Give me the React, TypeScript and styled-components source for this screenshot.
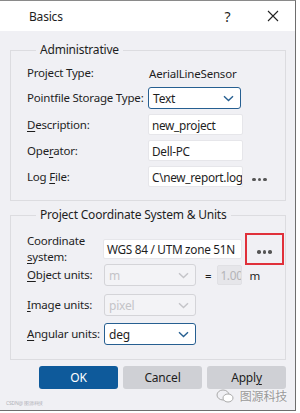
import React from "react";
import styled, { createGlobalStyle } from "styled-components";

const Global = createGlobalStyle`
  html, body { margin: 0; padding: 0; background: #ffffff; }
  body { font-family: "Noto Sans", "Open Sans", sans-serif; font-size: 11.5px; letter-spacing: -0.2px; color: #1e1e1e; }
  * { box-sizing: border-box; }
`;

const Dialog = styled.div`
  position: relative;
  width: 296px;
  height: 411px;
  border-top: 1px solid #8a8a8a;
  border-right: 1px solid #6e6e6e;
  border-bottom: 1px solid #6e6e6e;
  background: #f0f0f4;
  display: flex;
  flex-direction: column;
`;

const TitleBar = styled.div`
  height: 30px;
  background: #ffffff;
  display: flex;
  align-items: center;
  padding-left: 29px;
  font-size: 12px;
`;

const Title = styled.div`
  flex: 1;
`;

const TitleButton = styled.div`
  width: 45px;
  height: 30px;
  display: flex;
  align-items: center;
  justify-content: center;
  font-size: 14px;
`;

const Body = styled.div`
  padding: 12px 9px 0 10px;
  display: flex;
  flex-direction: column;
  gap: 7px;
`;

const Group = styled.fieldset<{ $pad: string }>`
  margin: 0;
  border: 1px solid #dcdce0;
  padding: ${(p) => p.$pad};
  display: flex;
  flex-direction: column;
  min-width: 0;
`;

const Legend = styled.legend`
  padding: 0 4px;
  margin-left: 9px;
  font-size: 12px;
  line-height: 14px;
`;

const Row = styled.div<{ $h: number; $mt?: number }>`
  display: flex;
  align-items: center;
  height: ${(p) => p.$h}px;
  margin-top: ${(p) => p.$mt ?? 0}px;
`;

const Label = styled.div<{ $w: number }>`
  width: ${(p) => p.$w}px;
  flex: none;
  line-height: 16px;
  white-space: nowrap;
`;

const Value = styled.div`
  padding-left: 1px;
`;

const Input = styled.div<{ $w: number; $h?: number; $disabled?: boolean }>`
  width: ${(p) => p.$w}px;
  height: ${(p) => p.$h ?? 21}px;
  flex: none;
  background: ${(p) => (p.$disabled ? "#e6e6ea" : "#ffffff")};
  color: ${(p) => (p.$disabled ? "#b4b4b8" : "#1e1e1e")};
  border: 1px solid ${(p) => (p.$disabled ? "#e0e0e4" : "#e6e6ea")};
  border-radius: 2px;
  display: flex;
  align-items: center;
  padding-left: ${(p) => (p.$disabled ? 2 : 3)}px;
  white-space: nowrap;
  overflow: hidden;
  font-size: 11.8px;
  letter-spacing: -0.3px;
`;

const Select = styled.div<{ $w: number; $disabled?: boolean }>`
  width: ${(p) => p.$w}px;
  height: 22px;
  flex: none;
  background: ${(p) => (p.$disabled ? "#f3f3f6" : "#ffffff")};
  color: ${(p) => (p.$disabled ? "#c4c4c8" : "#1e1e1e")};
  border: 1px solid ${(p) => (p.$disabled ? "#d4d4d8" : "#265f91")};
  border-radius: 3px;
  display: flex;
  align-items: center;
  justify-content: space-between;
  padding: 0 6px 0 4px;
  font-size: 12px;
`;

const Dots = styled.div`
  display: flex;
  justify-content: center;
  align-items: center;
  gap: 2px;
  padding-top: 6px;
`;

const LogDots = styled(Dots)`
  margin-left: 9px;
`;

const Dot = styled.span`
  width: 3.5px;
  height: 3.5px;
  border-radius: 50%;
  background: #555;
`;

const Highlight = styled.div`
  flex: none;
  margin-left: 3px;
  width: 39px;
  height: 32px;
  border: 2px solid #e0303a;
  display: flex;
  align-items: center;
  justify-content: center;
`;

const Eq = styled.span`
  margin: 0 6px 0 9px;
`;

const Unit = styled.span`
  margin-left: 7px;
`;

const Buttons = styled.div`
  display: flex;
  gap: 5px;
  justify-content: flex-end;
  margin-top: -1px;
`;

const Button = styled.div<{ $primary?: boolean }>`
  width: 79px;
  height: 23px;
  border-radius: 3px;
  background: ${(p) => (p.$primary ? "#0e5a9b" : "#cfd0d5")};
  color: ${(p) => (p.$primary ? "#ffffff" : "#1e1e1e")};
  display: flex;
  align-items: center;
  justify-content: center;
  font-size: 12px;
`;

const Watermark = styled.div`
  position: absolute;
  right: 8px;
  bottom: 6px;
  display: flex;
  align-items: center;
  gap: 6px;
  color: #9a9a9a;
  font-family: "Noto Sans CJK SC", sans-serif;
  font-size: 12px;
  text-shadow: 0 0 2px #fff;
`;

const SmallMark = styled.div`
  position: absolute;
  left: 6px;
  bottom: 4px;
  font-size: 5px;
  color: #b0b0b8;
`;

const Chevron = ({ color }: { color: string }) => (
  <svg width="11" height="7" viewBox="0 0 11 7">
    <path d="M1 1.2 L5.5 5.5 L10 1.2" fill="none" stroke={color} strokeWidth="1.4" />
  </svg>
);

const U = styled.span`
  text-decoration: underline;
  text-underline-offset: 2px;
`;

const DotsIcon = () => (
  <>
    <Dot />
    <Dot />
    <Dot />
  </>
);

export default function App() {
  return (
    <>
      <Global />
      <Dialog>
        <TitleBar>
          <Title>Basics</Title>
          <TitleButton>?</TitleButton>
          <TitleButton>
            <svg width="12" height="12" viewBox="0 0 12 12">
              <path d="M1 1 L11 11 M11 1 L1 11" stroke="#222" strokeWidth="1.1" />
            </svg>
          </TitleButton>
        </TitleBar>
        <Body>
          <Group $pad="7px 0 13px 16px">
            <Legend>Administrative</Legend>
            <Row $h={18}>
              <Label $w={121}>Project Type:</Label>
              <Value>AerialLineSensor</Value>
            </Row>
            <Row $h={22} $mt={5}>
              <Label $w={121}>Pointfile Storage Type:</Label>
              <Select $w={93}>
                Text <Chevron color="#265f91" />
              </Select>
            </Row>
            <Row $h={21} $mt={5}>
              <Label $w={121}>
                <U>D</U>escription:
              </Label>
              <Input $w={95}>new_project</Input>
            </Row>
            <Row $h={21} $mt={5}>
              <Label $w={121}>
                Ope<U>r</U>ator:
              </Label>
              <Input $w={95}>Dell-PC</Input>
            </Row>
            <Row $h={21} $mt={5}>
              <Label $w={121}>
                Log <U>F</U>ile:
              </Label>
              <Input $w={95}>C\new_report.log</Input>
              <LogDots>
                <DotsIcon />
              </LogDots>
            </Row>
          </Group>
          <Group $pad="12px 0 14px 16px">
            <Legend>Project Coordinate System &amp; Units</Legend>
            <Row $h={30}>
              <Label $w={76}>
                Coordinate
                <br />
                <U>s</U>ystem:
              </Label>
              <Input $w={139} $h={20}>WGS 84 / UTM zone 51N</Input>
              <Highlight>
                <Dots>
                  <DotsIcon />
                </Dots>
              </Highlight>
            </Row>
            <Row $h={22}>
              <Label $w={77}>
                <U>O</U>bject units:
              </Label>
              <Select $w={92} $disabled>
                m <Chevron color="#c4c4c8" />
              </Select>
              <Eq>=</Eq>
              <Input $w={25} $h={20} $disabled>
                1.000
              </Input>
              <Unit>m</Unit>
            </Row>
            <Row $h={22} $mt={8}>
              <Label $w={77}>
                <U>I</U>mage units:
              </Label>
              <Select $w={92} $disabled>
                pixel <Chevron color="#c4c4c8" />
              </Select>
            </Row>
            <Row $h={22} $mt={7}>
              <Label $w={77}>
                <U>A</U>ngular units:
              </Label>
              <Select $w={92}>
                deg <Chevron color="#265f91" />
              </Select>
            </Row>
          </Group>
          <Buttons>
            <Button $primary>OK</Button>
            <Button>Cancel</Button>
            <Button>
              Appl<U>y</U>
            </Button>
          </Buttons>
        </Body>
        <SmallMark>CSDN@ 图源科技</SmallMark>
        <Watermark>
          <svg width="18" height="14" viewBox="0 0 18 14">
            <ellipse cx="7" cy="6" rx="6" ry="5" fill="none" stroke="#aaa" strokeWidth="1" />
            <ellipse cx="12" cy="9" rx="5" ry="4" fill="#fff" stroke="#aaa" strokeWidth="1" />
          </svg>
          图源科技
        </Watermark>
      </Dialog>
    </>
  );
}
